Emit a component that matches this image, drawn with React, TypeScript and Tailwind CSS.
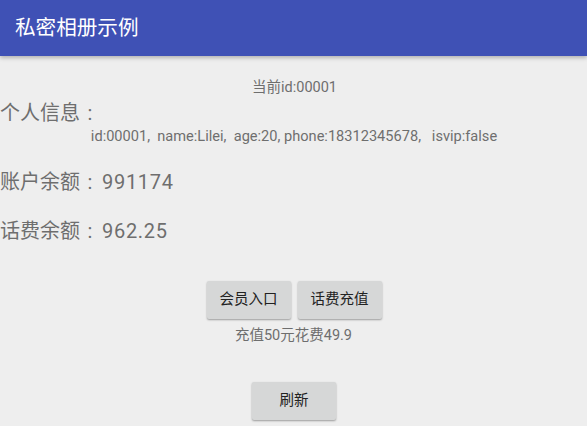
import React from "react";

const font = { fontFamily: '"Roboto", "Noto Sans CJK SC", sans-serif' };

function Btn({ children }: { children: React.ReactNode }) {
  return (
    <button className="w-[84px] h-[38px] rounded-[2px] bg-[#d6d7d7] text-[14.5px] text-[#222222] shadow-[0_1px_2px_rgba(0,0,0,0.35)] flex items-center justify-center">
      {children}
    </button>
  );
}

function Colon() {
  return <span className="inline-block w-[20px] text-center leading-[24px]">:</span>;
}

export default function App() {
  return (
    <div className="w-[587px] h-[426px] bg-[#eeeeee] overflow-hidden relative" style={font}>
      <div className="h-14 bg-[#3f51b5] flex items-center pl-[15px] relative z-10 shadow-[0_2px_4px_rgba(0,0,0,0.25)]">
        <span className="text-white text-[20.6px] leading-[24px]">私密相册示例</span>
      </div>
      <div className="flex flex-col text-[#6e6e6e]">
        <div className="mt-[24px] text-center text-[14.5px] leading-[16px] pl-[2px]">当前id:00001</div>
        <div className="mt-[5px] h-[24px] text-[20px] leading-[24px]">
          个人信息<Colon />
        </div>
        <div className="mt-[3px] text-center text-[14.6px] leading-[16px] whitespace-pre pl-[1px]">
          {"id:00001,  name:Lilei,  age:20, phone:18312345678,   isvip:false"}
        </div>
        <div className="mt-[26px] h-[24px] text-[20px] leading-[24px]">
          账户余额<Colon />
          <span className="ml-[2px] tracking-[0.7px]">991174</span>
        </div>
        <div className="mt-[25px] h-[24px] text-[20px] leading-[24px]">
          话费余额<Colon />
          <span className="ml-[2px] tracking-[0.7px]">962.25</span>
        </div>
        <div className="mt-[38px] flex justify-center gap-[7px] pl-[1px]">
          <Btn>会员入口</Btn>
          <Btn>话费充值</Btn>
        </div>
        <div className="mt-[9px] text-center text-[14.5px] leading-[16px]">充值50元花费49.9</div>
        <div className="mt-[38px] flex justify-center pl-[1px]">
          <Btn>刷新</Btn>
        </div>
      </div>
    </div>
  );
}
